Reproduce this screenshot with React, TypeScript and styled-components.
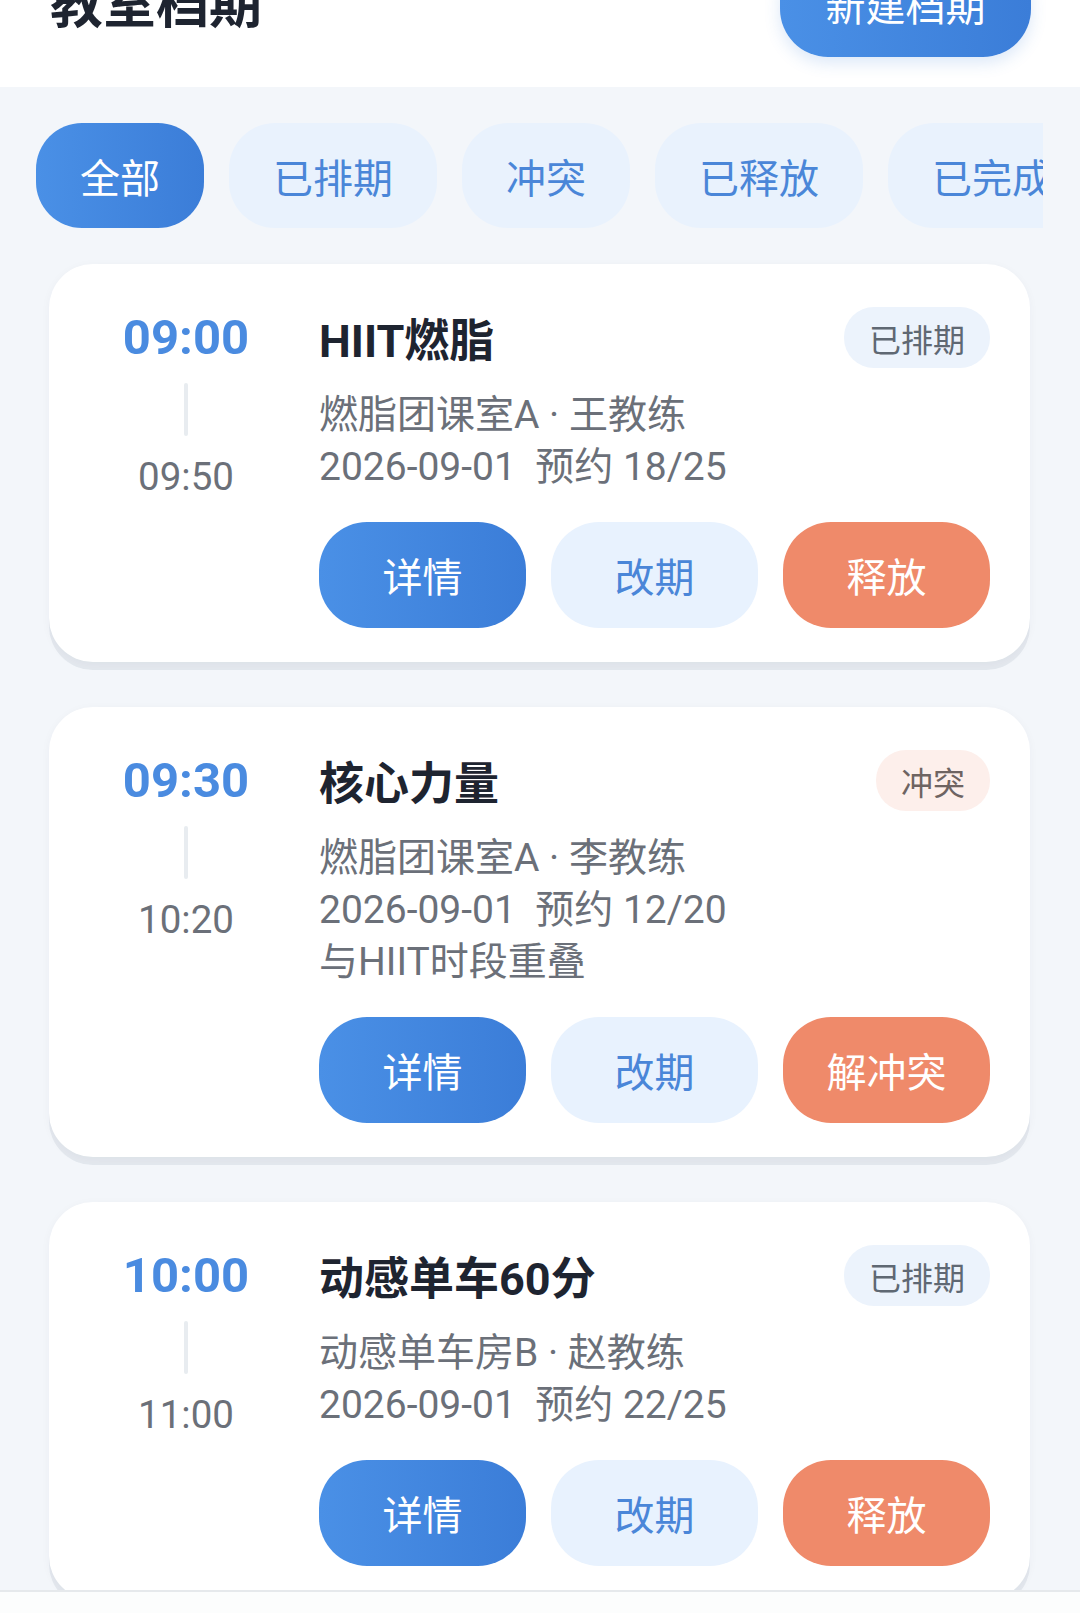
import { styled, createGlobalStyle } from "styled-components"

const GlobalStyle = createGlobalStyle`
    * {
        box-sizing: border-box;
    }

    body {
        margin: 0;
        background: #f3f6fa;
        font-family: Roboto, "Noto Sans CJK SC", sans-serif;
        overflow: hidden;
    }
`

const Page = styled.div`
    width: 1080px;
    min-height: 1613px;
    background: #f3f6fa;
`

const Header = styled.header`
    margin-top: -79px;
    height: 166px;
    padding: 0 49px 0 50px;
    background: #ffffff;
    display: flex;
    align-items: center;
    justify-content: space-between;
`

const PageTitle = styled.h1`
    margin: 0 0 8px 0;
    font-size: 53px;
    font-weight: 700;
    color: #1e2430;
`

const NewButton = styled.button`
    width: 251px;
    height: 106px;
    border: none;
    border-radius: 48px;
    background: linear-gradient(90deg, #4a90e6, #3b7dd8);
    box-shadow: 0 6px 16px rgba(59, 125, 216, 0.18);
    color: #ffffff;
    font-family: inherit;
    font-size: 40px;
`

const Tabs = styled.div`
    margin: 36px 37px 0 36px;
    display: flex;
    gap: 25px;
    overflow: hidden;
`

const Tab = styled.div<{ $active?: boolean }>`
    flex-shrink: 0;
    height: 105px;
    padding: 0 44px;
    border-radius: 46px;
    display: flex;
    align-items: center;
    font-size: 40px;
    color: ${p => (p.$active ? "#ffffff" : "#4a86d8")};
    background: ${p => (p.$active ? "linear-gradient(90deg, #4a90e6, #3b7dd8)" : "#e9f2fd")};
`

const List = styled.div`
    margin: 36px 50px 0 49px;
    display: flex;
    flex-direction: column;
    gap: 45px;
`

const Card = styled.div`
    background: #ffffff;
    border-radius: 44px;
    padding: 43px 40px 34px 40px;
    display: grid;
    grid-template-columns: 194px 1fr;
    column-gap: 36px;
    box-shadow: 0 8px 0 rgba(30, 50, 80, 0.07), 0 2px 10px rgba(30, 50, 80, 0.04);
`

const TimeCol = styled.div`
    display: flex;
    flex-direction: column;
    align-items: center;
`

const StartTime = styled.div`
    line-height: 61px;
    font-size: 49px;
    font-weight: 700;
    color: #4a8be0;
`

const TimeLine = styled.div`
    margin-top: 15px;
    width: 4px;
    height: 53px;
    border-radius: 2px;
    background: #e8ecf0;
`

const EndTime = styled.div`
    margin-top: 21px;
    line-height: 40px;
    font-size: 38.5px;
    color: #6b7079;
`

const Body = styled.div`
    display: flex;
    flex-direction: column;
`

const TitleRow = styled.div`
    height: 61px;
    display: flex;
    align-items: center;
    justify-content: space-between;
`

const CourseName = styled.div`
    font-size: 45px;
    font-weight: 700;
    color: #1e2430;
`

const Badge = styled.span<{ $tone: "plan" | "conflict" }>`
    height: 61px;
    padding: 0 25px;
    border-radius: 30px;
    display: flex;
    align-items: center;
    font-size: 32px;
    color: ${p => (p.$tone === "conflict" ? "#6e6462" : "#5f6873")};
    background: ${p => (p.$tone === "conflict" ? "#fdefeb" : "#ecf3fc")};
`

const Meta = styled.div`
    margin-top: 21px;
    font-size: 39px;
    line-height: 52px;
    color: #6b7079;
    white-space: pre;
`

const Actions = styled.div`
    margin-top: 29px;
    display: grid;
    grid-template-columns: repeat(3, 1fr);
    gap: 25px;
`

const ActionButton = styled.button<{ $kind: "primary" | "soft" | "warn" }>`
    height: 106px;
    border: none;
    border-radius: 48px;
    font-family: inherit;
    font-size: 40px;
    color: ${p => (p.$kind === "soft" ? "#4a86d8" : "#ffffff")};
    background: ${p =>
        p.$kind === "primary"
            ? "linear-gradient(90deg, #4a90e6, #3b7dd8)"
            : p.$kind === "warn"
                ? "#ef8a6a"
                : "#e8f2fe"};
`

const BottomBar = styled.div`
    position: fixed;
    left: 0;
    right: 0;
    bottom: 0;
    height: 23px;
    background: #fcfdfd;
    border-top: 2px solid #e6e9ec;
`

type Session = {
    start: string
    end: string
    name: string
    status: "plan" | "conflict"
    lines: string[]
    last: string
}

const sessions: Session[] = [
    {
        start: "09:00",
        end: "09:50",
        name: "HIIT燃脂",
        status: "plan",
        lines: ["燃脂团课室A · 王教练", "2026-09-01  预约 18/25"],
        last: "释放",
    },
    {
        start: "09:30",
        end: "10:20",
        name: "核心力量",
        status: "conflict",
        lines: ["燃脂团课室A · 李教练", "2026-09-01  预约 12/20", "与HIIT时段重叠"],
        last: "解冲突",
    },
    {
        start: "10:00",
        end: "11:00",
        name: "动感单车60分",
        status: "plan",
        lines: ["动感单车房B · 赵教练", "2026-09-01  预约 22/25"],
        last: "释放",
    },
]

const tabs = ["全部", "已排期", "冲突", "已释放", "已完成"]

const App = () => {

    return (

        <Page>
            <GlobalStyle />

            <Header>
                <PageTitle>教室档期</PageTitle>
                <NewButton>新建档期</NewButton>
            </Header>

            <Tabs>
                {tabs.map((t, i) => (
                    <Tab key={t} $active={i === 0}>{t}</Tab>
                ))}
            </Tabs>

            <List>
                {sessions.map(s => (
                    <Card key={s.start}>

                        <TimeCol>
                            <StartTime>{s.start}</StartTime>
                            <TimeLine />
                            <EndTime>{s.end}</EndTime>
                        </TimeCol>

                        <Body>
                            <TitleRow>
                                <CourseName>{s.name}</CourseName>
                                <Badge $tone={s.status}>{s.status === "conflict" ? "冲突" : "已排期"}</Badge>
                            </TitleRow>

                            <Meta>{s.lines.join("\n")}</Meta>

                            <Actions>
                                <ActionButton $kind="primary">详情</ActionButton>
                                <ActionButton $kind="soft">改期</ActionButton>
                                <ActionButton $kind="warn">{s.last}</ActionButton>
                            </Actions>
                        </Body>

                    </Card>
                ))}
            </List>

            <BottomBar />
        </Page>

    )

}

export default App
